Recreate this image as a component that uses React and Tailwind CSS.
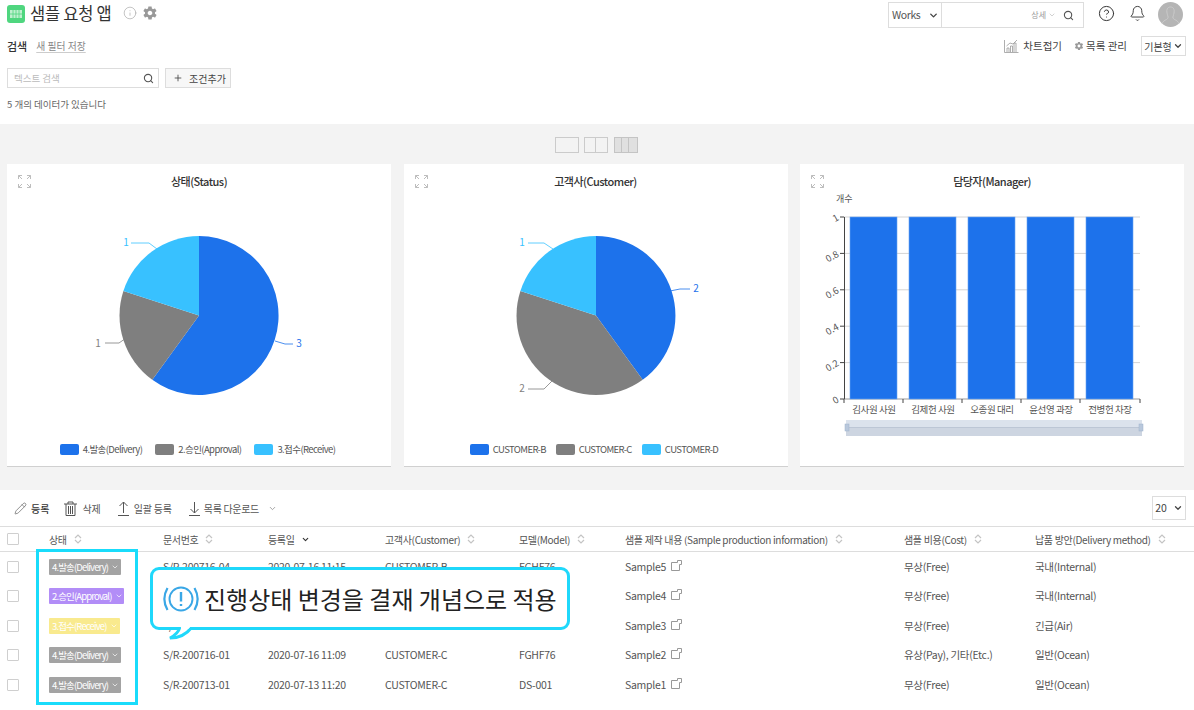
import React from 'react';
import { Search, ChevronDown, CircleHelp, Bell, Info, Pencil, Plus } from 'lucide-react';
import { IoMdSettings } from 'react-icons/io';

const BLUE = '#1d72eb', GREY = '#7f7f7f', SKY = '#38c1ff';

function Sort() {
  return (
    <svg width="8" height="10" viewBox="0 0 8 10" className="ml-[7px] shrink-0">
      <path d="M1 4 L4 1 L7 4 M1 6 L4 9 L7 6" fill="none" stroke="#c4c4c4" strokeWidth="1.2" />
    </svg>
  );
}

function Expand() {
  return (
    <svg width="13" height="13" viewBox="0 0 13 13" fill="none" stroke="#bdbdbd" strokeWidth="1">
      <path d="M0.5 4 V0.5 H4 M0.5 0.5 L4 4 M9 0.5 H12.5 V4 M12.5 0.5 L9 4 M0.5 9 V12.5 H4 M0.5 12.5 L4 9 M12.5 9 V12.5 H9 M12.5 12.5 L9 9" />
    </svg>
  );
}

function NoteIcon() {
  return (
    <svg width="11" height="11" viewBox="0 0 11 11" fill="none" stroke="#999" strokeWidth="1" className="ml-[5px] mb-[3px]">
      <path d="M0.5 2.5 H6.5 V0.5 H10.5 V4.5 H8.5 V10.5 H0.5 Z" />
    </svg>
  );
}

function Pie({ slices, labels }) {
  return (
    <svg width="384" height="240" viewBox="0 0 384 240">
      {slices.map((d, i) => <path key={i} d={d.d} fill={d.c} />)}
      {labels.map((l, i) => (
        <g key={i}>
          <polyline points={l.p} fill="none" stroke={l.c} strokeWidth="0.8" />
          <text x={l.x} y={l.y} fontSize="10" fill={l.c} textAnchor="middle" fontFamily="'Noto Sans CJK KR', sans-serif">{l.t}</text>
        </g>
      ))}
    </svg>
  );
}

function Legend({ items, gap }) {
  return (
    <div className={`flex justify-center items-center ${gap} mt-[2px] h-[18px] pr-[3px]`}>
      {items.map((it) => (
        <div key={it.t} className="flex items-center gap-[4px]">
          <span className="w-[19px] h-[11px] rounded-[2px]" style={{ background: it.c }} />
          <span className="text-[9.5px] tracking-[-0.6px] text-[#555]">{it.t}</span>
        </div>
      ))}
    </div>
  );
}

function Card({ title, children }) {
  return (
    <div className="w-[384px] h-[303px] bg-white border-b border-[#d0d0d0]">
      <div className="grid grid-cols-[1fr_auto_1fr] items-center h-[34px] pl-[11px]">
        <Expand />
        <div className="text-[11px] leading-[16px] font-medium text-[#333] tracking-[-0.5px] pr-[11px]">{title}</div>
        <span />
      </div>
      {children}
    </div>
  );
}

function BarChart() {
  const bars = [44, 103, 162, 221, 280];
  const names = ['김사원 사원', '김제헌 사원', '오종원 대리', '윤선영 과장', '전병헌 차장'];
  const ticks = [['1', 19], ['0.8', 55.4], ['0.6', 91.8], ['0.4', 128.2], ['0.2', 164.6], ['0', 201]];
  return (
    <svg width="384" height="256" viewBox="0 0 384 256" className="overflow-visible" fontFamily="'Noto Sans CJK KR', sans-serif">
      <text x="36" y="4" fontSize="9" fill="#555">개수</text>
      {ticks.map(([t, y]) => (
        <g key={t}>
          <line x1="44" x2="340" y1={y} y2={y} stroke={t === '0' ? '#999' : '#d4d4d4'} strokeWidth="1" />
          <line x1="40" x2="44" y1={y} y2={y} stroke="#444" strokeWidth="1" />
          <text x="38" y={y + 3} fontSize="9.5" fill="#555" textAnchor="end" transform={`rotate(-30 38 ${y})`}>{t}</text>
        </g>
      ))}
      <line x1="44.5" x2="44.5" y1="19" y2="201" stroke="#444" strokeWidth="1" />
      {bars.map((x, i) => (
        <g key={x}>
          <rect x={x + 6} y="19" width="47" height="182" fill={BLUE} stroke="#6aa3f2" strokeWidth="0.6" />
          <line x1={x} x2={x} y1="201" y2="205" stroke="#444" strokeWidth="1" />
          <text x={x + 30} y="215" fontSize="9.5" letterSpacing="-0.4" fill="#555" textAnchor="middle">{names[i]}</text>
        </g>
      ))}
      <line x1="340" x2="340" y1="201" y2="205" stroke="#444" strokeWidth="1" />
      <rect x="46" y="222" width="296" height="16" fill="#dbe2ec" />
      <rect x="46" y="230" width="296" height="8" fill="#cdd5e1" />
      <line x1="46" x2="342" y1="229.5" y2="229.5" stroke="#bcc6d5" />
      <rect x="45" y="226" width="4" height="7" fill="#b9c8dc" stroke="#9fb2cc" strokeWidth="0.5" />
      <rect x="339" y="226" width="4" height="7" fill="#b9c8dc" stroke="#9fb2cc" strokeWidth="0.5" />
    </svg>
  );
}

const rows = [
  { s: '4.발송(Delivery)', bg: 'bg-[#a3a3a3]', w: 'w-[72px]', doc: 'S/R-200716-04', date: '2020-07-16 11:15', cust: 'CUSTOMER-B', model: 'FGHF76', sample: 'Sample5', cost: '무상(Free)', del: '국내(Internal)' },
  { s: '2.승인(Approval)', bg: 'bg-[#b28df7]', w: 'w-[75px]', doc: '', date: '', cust: '', model: '', sample: 'Sample4', cost: '무상(Free)', del: '국내(Internal)' },
  { s: '3.접수(Receive)', bg: 'bg-[#f9ea8e]', w: 'w-[71px]', doc: 'S/R-200716-02', date: '2020-07-16 11:10', cust: 'CUSTOMER-D', model: 'FGHF76', sample: 'Sample3', cost: '무상(Free)', del: '긴급(Air)' },
  { s: '4.발송(Delivery)', bg: 'bg-[#a3a3a3]', w: 'w-[72px]', doc: 'S/R-200716-01', date: '2020-07-16 11:09', cust: 'CUSTOMER-C', model: 'FGHF76', sample: 'Sample2', cost: '유상(Pay), 기타(Etc.)', del: '일반(Ocean)' },
  { s: '4.발송(Delivery)', bg: 'bg-[#a3a3a3]', w: 'w-[72px]', doc: 'S/R-200713-01', date: '2020-07-13 11:20', cust: 'CUSTOMER-C', model: 'DS-001', sample: 'Sample1', cost: '무상(Free)', del: '일반(Ocean)' },
];

const heads = ['상태', '문서번호', '등록일', '고객사(Customer)', '모델(Model)', '샘플 제작 내용 (Sample production information)', '샘플 비용(Cost)', '납품 방안(Delivery method)'];
const cols = 'grid grid-cols-[49px_114px_105px_117px_134px_106px_279px_131px_1fr] items-center';

function Check() {
  return <span className="ml-[7px] block w-[12px] h-[12px] border border-[#cfcfcf] rounded-[1px] bg-white" />;
}

export default function App() {
  const font = { fontFamily: "'Noto Sans CJK KR', 'Noto Sans', sans-serif" };
  return (
    <div className="relative w-[1194px] h-[710px] overflow-hidden bg-white text-[#444]" style={font}>
      {/* top header */}
      <div className="h-[124px] pl-[7px] pr-[11px]">
        <div className="flex items-start h-[33px]">
          <div className="mt-[5px] w-[18px] h-[18px] rounded-[3px] bg-[#4fd67f] flex items-center justify-center">
            <svg width="12" height="8" viewBox="0 0 12 8"><path d="M0 0H12V8H0Z" fill="#bff0cf" /><path d="M3 0V8M6 0V8M9 0V8M0 4H12" stroke="#4fd67f" strokeWidth="0.8" /></svg>
          </div>
          <div className="ml-[5px] text-[16.5px] leading-[26px] tracking-[-0.25px] text-[#333]">샘플 요청 앱</div>
          <Info size={14} strokeWidth={1.2} className="ml-[11px] mt-[6px] text-[#aaa]" />
          <IoMdSettings size={16} className="ml-[5px] mt-[5px] text-[#999]" />
          <div className="ml-auto mt-[2px] flex items-center w-[196px] h-[26px] border border-[#ddd]">
            <div className="flex items-center w-[53px] h-full border-r border-[#ddd] pl-[3px] text-[10.5px] tracking-[-0.4px] text-[#555]">
              Works<ChevronDown size={11} strokeWidth={3} className="ml-[8px] text-[#444]" />
            </div>
            <div className="flex-1 flex items-center justify-end pr-[9px] text-[8px] text-[#999]">
              상세 <ChevronDown size={8} className="ml-[2px] mr-[7px] text-[#bbb]" />
              <Search size={11} strokeWidth={2.4} className="text-[#555]" />
            </div>
          </div>
          <CircleHelp size={17} strokeWidth={1.4} className="ml-[14px] mt-[5px] text-[#333]" />
          <Bell size={17} strokeWidth={1.3} className="ml-[14px] mt-[5px] text-[#333]" />
          <div className="ml-[12px] mt-[2px] w-[25px] h-[25px] rounded-full bg-[#b5b5b5] overflow-hidden">
            <svg width="25" height="25" viewBox="0 0 25 25" fill="none" stroke="#cfcfcf" strokeWidth="0.8"><path d="M12.5 5 C9 5 8.5 8 9 11 C9.3 13 10.5 15 10 16 C9 18 5 18 4 22 M12.5 5 C16 5 16.5 8 16 11 C15.7 13 14.5 15 15 16 C16 18 20 18 21 22" /></svg>
          </div>
        </div>
        <div className="flex items-start h-[35px] -mr-[3px]">
          <div className="mt-[5px] text-[11px] font-medium text-[#333] leading-[17px]">검색</div>
          <div className="mt-[5px] ml-[9px] text-[9.8px] text-[#888] leading-[17px] underline underline-offset-2 decoration-[#ccc]">새 필터 저장</div>
          <div className="ml-auto mt-[4px] flex items-center text-[10.5px] text-[#444] leading-[17px]">
            <svg width="15" height="14" viewBox="0 0 15 14" fill="none" stroke="#999" strokeWidth="0.8"><path d="M0.5 1V13.5H14.5M3 13V9H5V13M6.5 13V7H8.5V13M10 13V4H12V13M2.5 7L6 4L9 5L13 1" /></svg>
            <span className="ml-[4px]">차트접기</span>
            <IoMdSettings size={10} className="ml-[12px] text-[#999]" />
            <span className="ml-[2px]">목록 관리</span>
          </div>
          <div className="ml-[14px] mt-[3px] flex items-center justify-center gap-[1px] w-[45px] h-[20px] border border-[#ddd] text-[10px] text-[#444]">
            기본형<ChevronDown size={10} strokeWidth={3} />
          </div>
        </div>
        <div className="flex items-center gap-[6px] h-[20px]">
          <div className="flex items-center justify-between w-[152px] h-[20px] border border-[#ddd] pl-[6px] pr-[4px] text-[9.5px] text-[#bbb]">
            텍스트 검색<Search size={11} strokeWidth={2.4} className="text-[#555]" />
          </div>
          <div className="flex items-center justify-center w-[66px] h-[20px] border border-[#ddd] bg-[#f7f7f7] pl-[3px] text-[10px] text-[#444]">
            <Plus size={10} strokeWidth={2} className="mr-[6px]" />조건추가
          </div>
        </div>
        <div className="mt-[7px] text-[9.5px] leading-[18px] text-[#666]">5 개의 데이터가 있습니다</div>
      </div>

      {/* chart band */}
      <div className="h-[366px] bg-[#f3f3f3] pt-[13px] px-[7px]">
        <div className="flex justify-center items-center gap-[5.5px] h-[16px] pr-[2px]">
          <span className="w-[24px] h-[16px] border border-[#cbcbcb] bg-[#f3f3f3]" />
          <span className="w-[24px] h-[16px] border border-[#cbcbcb] bg-[#f3f3f3] flex"><i className="w-1/2 border-r border-[#cbcbcb]" /></span>
          <span className="w-[24px] h-[16px] border border-[#c4c4c4] bg-[#e0e0e0] flex"><i className="w-1/3 border-r border-[#c4c4c4]" /><i className="w-1/3 border-r border-[#c4c4c4]" /></span>
        </div>
        <div className="mt-[11px] flex gap-[12.5px]">
          <Card title="상태(Status)">
            <Pie
              slices={[
                { c: BLUE, d: 'M192 117.5 L192 38 A79.5 79.5 0 1 1 145.3 181.8 Z' },
                { c: GREY, d: 'M192 117.5 L145.3 181.8 A79.5 79.5 0 0 1 116.4 92.9 Z' },
                { c: SKY, d: 'M192 117.5 L116.4 92.9 A79.5 79.5 0 0 1 192 38 Z' },
              ]}
              labels={[
                { c: SKY, t: '1', x: 119, y: 48, p: '124,45 142,45 150,51' },
                { c: GREY, t: '1', x: 91, y: 149, p: '98,145 112,145 122,138' },
                { c: BLUE, t: '3', x: 292, y: 149, p: '268,143 278,146 286,146' },
              ]}
            />
            <Legend gap="gap-[13px]" items={[{ c: BLUE, t: '4.발송(Delivery)' }, { c: GREY, t: '2.승인(Approval)' }, { c: SKY, t: '3.접수(Receive)' }]} />
          </Card>
          <Card title="고객사(Customer)">
            <Pie
              slices={[
                { c: BLUE, d: 'M192 117.5 L192 38 A79.5 79.5 0 0 1 238.7 181.8 Z' },
                { c: GREY, d: 'M192 117.5 L238.7 181.8 A79.5 79.5 0 0 1 116.4 92.9 Z' },
                { c: SKY, d: 'M192 117.5 L116.4 92.9 A79.5 79.5 0 0 1 192 38 Z' },
              ]}
              labels={[
                { c: SKY, t: '1', x: 118, y: 48, p: '124,45 140,45 149,51' },
                { c: GREY, t: '2', x: 118, y: 194, p: '124,191 140,191 152,179' },
                { c: BLUE, t: '2', x: 292, y: 94, p: '266,93 276,91 286,91' },
              ]}
            />
            <Legend gap="gap-[10px]" items={[{ c: BLUE, t: 'CUSTOMER-B' }, { c: GREY, t: 'CUSTOMER-C' }, { c: SKY, t: 'CUSTOMER-D' }]} />
          </Card>
          <Card title="담당자(Manager)">
            <BarChart />
          </Card>
        </div>
      </div>

      {/* toolbar */}
      <div className="flex items-center h-[36px] pl-[14px] pr-[8px] text-[10px] text-[#555]">
        <Pencil size={13} strokeWidth={1.2} />
        <span className="ml-[4px] font-medium text-[#333]">등록</span>
        <svg width="13" height="15" viewBox="0 0 13 15" fill="none" stroke="#555" strokeWidth="1" className="ml-[15px]"><path d="M0 3H13M4 3V1H9V3M2 3V14.5H11V3M4.5 5V13M6.5 5V13M8.5 5V13" /></svg>
        <span className="ml-[5px]">삭제</span>
        <svg width="13" height="15" viewBox="0 0 13 15" fill="none" stroke="#555" strokeWidth="1" className="ml-[16px]"><path d="M1 14.5H12M6.5 12V1M2.5 5L6.5 1L10.5 5" /></svg>
        <span className="ml-[4px] tracking-[-0.2px]">일괄 등록</span>
        <svg width="13" height="15" viewBox="0 0 13 15" fill="none" stroke="#555" strokeWidth="1" className="ml-[16px]"><path d="M1 14.5H12M6.5 1V12M2.5 8L6.5 12L10.5 8" /></svg>
        <span className="ml-[3px] tracking-[-0.35px]">목록 다운로드</span>
        <ChevronDown size={9} className="ml-[9px] text-[#888]" />
        <div className="ml-auto flex items-center justify-center gap-[6px] w-[34px] h-[24px] border border-[#ddd] text-[10.5px] text-[#444]">
          20<ChevronDown size={10} strokeWidth={3} />
        </div>
      </div>

      {/* table */}
      <div className={`${cols} h-[26px] border-y border-[#ddd] text-[10px] text-[#555]`}>
        <Check />
        {heads.map((h, i) => (
          <div key={h} className="flex items-center whitespace-nowrap tracking-[-0.33px]">
            {h}
            {i === 2 ? <ChevronDown size={9} strokeWidth={3} className="ml-[6px] text-[#333]" /> : <Sort />}
          </div>
        ))}
      </div>
      {rows.map((r) => (
        <div key={r.sample} className={`${cols} h-[29.5px] text-[10.5px] tracking-[-0.3px] text-[#555] whitespace-nowrap`}>
          <Check />
          <div>
            <div className={`${r.bg} ${r.w} h-[16px] rounded-[1px] flex items-center pl-[3px] text-white text-[9.5px] tracking-[-0.85px]`}>
              {r.s}<ChevronDown size={8} className="ml-[3px]" />
            </div>
          </div>
          <div>{r.doc}</div>
          <div>{r.date}</div>
          <div>{r.cust}</div>
          <div>{r.model}</div>
          <div className="flex items-center">{r.sample}<NoteIcon /></div>
          <div>{r.cost}</div>
          <div>{r.del}</div>
        </div>
      ))}

      {/* annotation overlays */}
      <div className="absolute left-[36px] top-[549px] w-[102px] h-[156px] border-[3px] border-[#19dcfb]" />
      <div className="absolute left-[150px] top-[567px] w-[420px] h-[63px] border-[3px] border-[#1fd8fb] rounded-[9px] bg-white flex items-center pl-[10px]">
        <svg width="36" height="30" viewBox="0 0 36 30" fill="none" stroke="#3aa7e6" className="shrink-0">
          <circle cx="18" cy="15" r="11.5" strokeWidth="1.9" />
          <path d="M4.5 4 C0.5 11 0.5 19 4.5 26 M31.5 4 C35.5 11 35.5 19 31.5 26" strokeWidth="2.2" />
          <path d="M18 8 V17.5 M18 20 V22" strokeWidth="2.4" />
        </svg>
        <span className="ml-[5px] text-[24px] tracking-[0px] leading-none text-[#222] whitespace-nowrap">진행상태 변경을 결재 개념으로 적용</span>
        <svg width="30" height="14" viewBox="0 0 30 14" className="absolute left-[11px] top-[57px]">
          <path d="M16 0 C15 4 12 8 6 11 C14 11 22 8 28 0" fill="#fff" stroke="#1fd8fb" strokeWidth="3" />
          <path d="M17 0 H26 L24 2 H17 Z" fill="#fff" />
        </svg>
      </div>
    </div>
  );
}
